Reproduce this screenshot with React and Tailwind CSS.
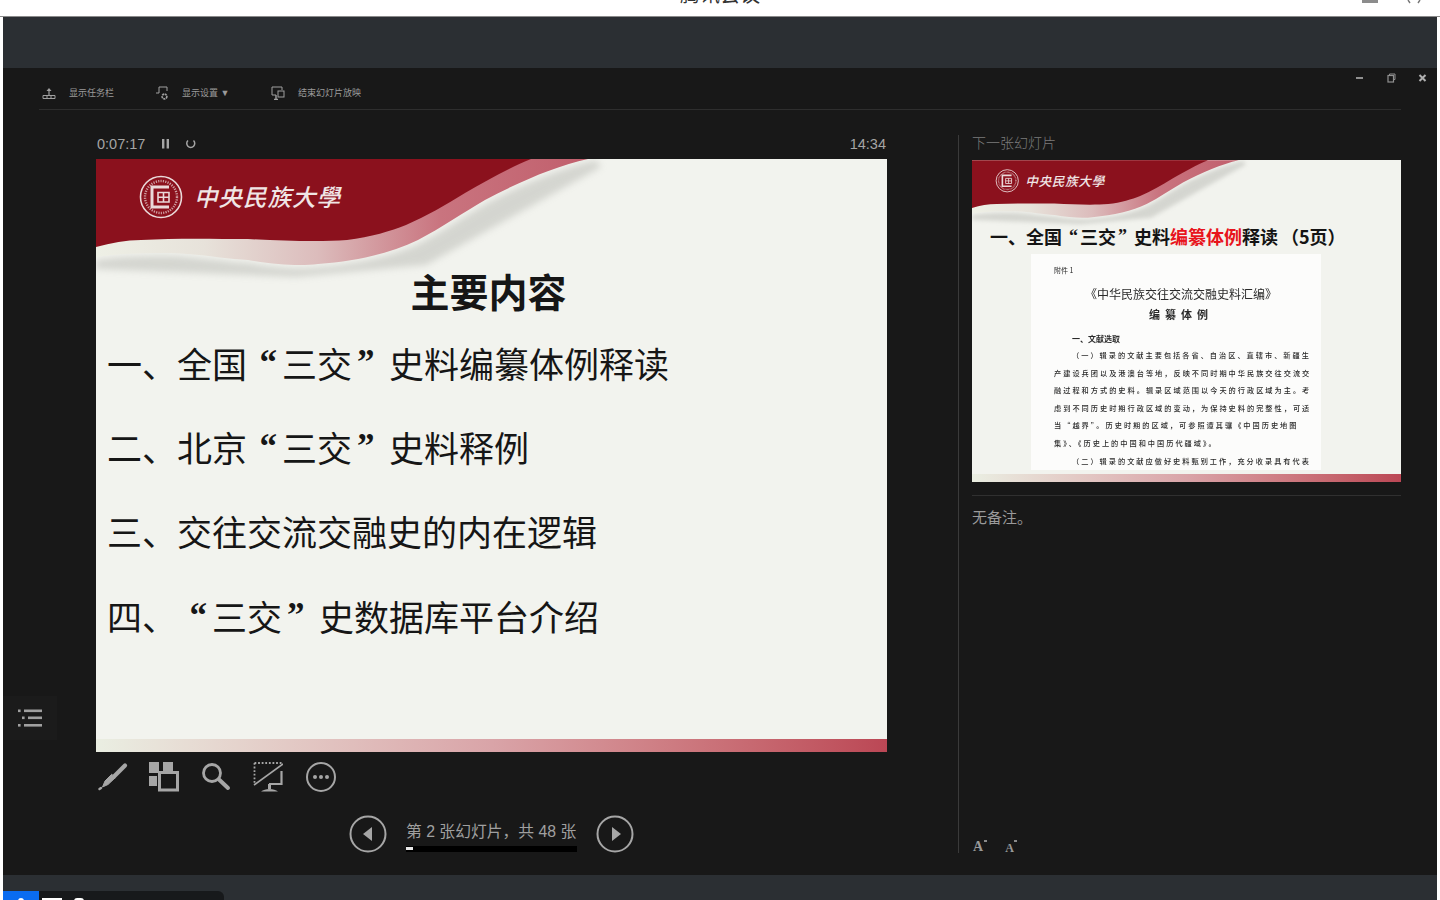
import React from "react";

const SANS = "font-['Liberation_Sans','Noto_Sans_CJK_SC',sans-serif]";
const SLIDE_FONT = "font-['Noto_Sans_CJK_SC',sans-serif]";

function Q({ children, w, side }) {
  return (
    <span
      className={`inline-block font-['Liberation_Serif',serif] font-bold ${side === "l" ? "text-right" : "text-left"} ${w}`}
    >
      {children}
    </span>
  );
}

function Banner({ id }) {
  return (
    <svg viewBox="0 0 791 593" className="absolute inset-0 w-full h-full">
      <defs>
        <linearGradient id={`band${id}`} x1="0" x2="492" y1="0" y2="0" gradientUnits="userSpaceOnUse">
          <stop offset="0" stopColor="#eef0e6" />
          <stop offset="0.22" stopColor="#e7e2da" />
          <stop offset="0.45" stopColor="#dcbcbc" />
          <stop offset="0.7" stopColor="#c9747f" />
          <stop offset="1" stopColor="#c15f6c" />
        </linearGradient>
        <filter id={`sh${id}`} x="-10%" y="-30%" width="120%" height="160%">
          <feGaussianBlur stdDeviation="3.5" />
        </filter>
      </defs>
      <path
        d="M0 101 C25 97 50 97 75 97 C105 98 130 103 152 104 C180 109 205 110 222 108 C262 105 297 97 324 84 C347 72 370 56 391 44 C427 25 462 10 500 1 L505 8 L330 106 L200 118 L0 110 Z"
        fill="#a9aaa4"
        opacity="0.4"
        filter={`url(#sh${id})`}
      />
      <path
        d="M0 98 C25 94 50 94 75 94 C105 95 130 100 152 101 C180 106 205 107 222 105 C262 102 295 94 322 81 C345 69 368 53 389 41 C425 22 460 7 492 0 L0 0 Z"
        fill={`url(#band${id})`}
      />
      <path
        d="M0 88 C15 84 30 81 45 81 C80 79 120 80 152 80 C190 82 225 83 251 81 C275 78 295 72 310 66 C330 57 350 46 369 34 C390 22 415 8 435 0 L0 0 Z"
        fill="#8b111d"
      />
      <g fill="none" stroke="#ead9d9">
        <circle cx="65" cy="38" r="20.5" strokeWidth="1.6" />
        <circle cx="65" cy="38" r="16" strokeWidth="2.4" strokeDasharray="1.2 1.2" opacity="0.7" />
        <path d="M73 28 H56 V48 H73" strokeWidth="3" />
        <path d="M62 33.5 H73 V43 H62 Z M62 38.2 H73 M67.5 33.5 V43" strokeWidth="1.6" />
      </g>
      <text
        x="98"
        y="47"
        fill="#f0e5e5"
        fontSize="23.5"
        fontWeight="500"
        letterSpacing="1"
        fontStyle="italic"
        fontFamily="'Noto Sans CJK SC',sans-serif"
      >
        中央民族大學
      </text>
    </svg>
  );
}

function MainSlide() {
  const line = `h-[84.3px] flex items-center text-[35px] leading-none text-[#161616] whitespace-nowrap pl-[11px] ${SLIDE_FONT}`;
  const ql = "w-[35px] pr-[5px]";
  const qr = "w-[37px] pl-[5px]";
  return (
    <div className="relative shrink-0 w-[791px] h-[593px] bg-[#f2f3ee] flex flex-col overflow-hidden">
      <Banner id="a" />
      <div className="relative pt-[107px]">
        <div className={`h-[48px] pr-[6px] flex items-center justify-center text-[39px] font-bold leading-none text-[#161616] ${SLIDE_FONT}`}>
          主要内容
        </div>
        <div className="mt-[6px] flex flex-col">
          <div className={line}>
            一、全国<Q w={ql} side="l">“</Q>三交<Q w={qr} side="r">”</Q>史料编纂体例释读
          </div>
          <div className={line}>
            二、北京<Q w={ql} side="l">“</Q>三交<Q w={qr} side="r">”</Q>史料释例
          </div>
          <div className={line}>三、交往交流交融史的内在逻辑</div>
          <div className={line}>
            四、<Q w={ql} side="l">“</Q>三交<Q w={qr} side="r">”</Q>史数据库平台介绍
          </div>
        </div>
      </div>
      <div className="relative mt-auto h-[13px] bg-gradient-to-r from-[#eaeee2] via-[#d9a4a8] to-[#bb4755]" />
    </div>
  );
}

function NextSlide() {
  const body = [
    ["（一）辑录的文献主要包括各省、自治区、直辖市、新疆生", true],
    ["产建设兵团以及港澳台等地，反映不同时期中华民族交往交流交", false],
    ["融过程和方式的史料。辑录区域范围以今天的行政区域为主。考", false],
    ["虑到不同历史时期行政区域的变动，为保持史料的完整性，可适", false],
    ["当“越界”。历史时期的区域，可参照谭其骧《中国历史地图", false],
    ["集》、《历史上的中国和中国历代疆域》。", false],
    ["（二）辑录的文献应做好史料甄别工作，充分收录具有代表", true],
  ];
  const ql = "w-[18px] pr-[2px]";
  const qr = "w-[18px] pl-[2px]";
  return (
    <div className="relative shrink-0 w-[429px] h-[322px] bg-[#f2f3ee] flex flex-col overflow-hidden">
      <Banner id="b" />
      <div className={`relative pt-[64px] pl-[18px] h-[89px] flex items-start text-[18px] leading-[24px] font-bold text-[#141414] whitespace-nowrap ${SLIDE_FONT}`}>
        <span>一、全国</span>
        <Q w={ql} side="l">“</Q>
        <span>三交</span>
        <Q w={qr} side="r">”</Q>
        <span>史料</span>
        <span className="text-[#e8141c]">编纂体例</span>
        <span>释读</span>
        <span className="ml-[3px]">（5页）</span>
      </div>
      <div className={`relative mt-[5px] ml-[59px] w-[290px] h-[216px] bg-[#fcfcfb] overflow-hidden pl-[23px] text-[#2a2a2a] blur-[0.3px] ${SLIDE_FONT}`}>
        <div className="pt-[11px] text-[7px] leading-[10px]">附件 1</div>
        <div className="mt-[14px] pr-[13px] text-center text-[12px] leading-[10px] whitespace-nowrap">《中华民族交往交流交融史料汇编》</div>
        <div className="mt-[10px] pr-[13px] text-center text-[11px] leading-[10px] font-bold tracking-[5px]">编纂体例</div>
        <div className="mt-[15px] pl-[18px] text-[8px] leading-[10px] font-bold">一、文献选取</div>
        <div className="mt-[3px]">
          {body.map(([t, indent], i) => (
            <div
              key={i}
              className={`text-[7.2px] leading-[17.6px] tracking-[2px] font-medium whitespace-nowrap ${indent ? "pl-[18px]" : ""}`}
            >
              {t}
            </div>
          ))}
        </div>
      </div>
      <div className="absolute bottom-0 left-0 right-0 h-[8px] bg-gradient-to-r from-[#eaeee2] via-[#d9a4a8] to-[#bb4755]" />
    </div>
  );
}

const Gray = "#a6a6a6";

function Toolbar() {
  const txt = `text-[9px] leading-none text-[#9b9b9b] whitespace-nowrap ${SANS}`;
  return (
    <div className="h-[42px] mx-[36px] border-b border-[#2e2e2e] pt-[9px] flex items-center pl-[3px]">
      <div className="w-[113px] flex items-center gap-[13px]">
        <svg width="14" height="14" viewBox="0 0 14 14" fill="none" stroke="#a0a0a0">
          <path d="M7 2 L4.5 5 H9.5 Z" fill="#a0a0a0" stroke="none" />
          <path d="M7 5 V9" strokeWidth="1.2" />
          <path d="M1 9.5 H13 V12.5 H1 Z M5 9.5 V12.5 M9 9.5 V12.5" strokeWidth="1" />
        </svg>
        <span className={txt}>显示任务栏</span>
      </div>
      <div className="w-[116px] flex items-center gap-[13px]">
        <svg width="14" height="14" viewBox="0 0 14 14" fill="none" stroke="#a0a0a0">
          <path d="M4 7 V1 H12 V5" strokeWidth="1" />
          <path d="M1 7 H4" strokeWidth="1" />
          <circle cx="9.5" cy="10.5" r="2.4" strokeWidth="1.6" strokeDasharray="2 0.6" />
        </svg>
        <span className={txt}>显示设置 ▼</span>
      </div>
      <div className="flex items-center gap-[13px]">
        <svg width="14" height="14" viewBox="0 0 14 14" fill="none" stroke="#a0a0a0">
          <path d="M1 1 H11 V4 M1 1 V9 H5" strokeWidth="1" />
          <rect x="7" y="5" width="6" height="6" strokeWidth="1" />
          <path d="M3 13.5 H7 M5 9 V13.5" strokeWidth="1.4" />
        </svg>
        <span className={txt}>结束幻灯片放映</span>
      </div>
    </div>
  );
}

function WindowControls() {
  return (
    <div className="absolute top-[5px] right-[10px] flex items-center gap-[22px]">
      <div className="w-[9px] h-[10px] flex items-center">
        <div className="w-[7px] h-[2px] bg-[#909090]" />
      </div>
      <svg width="9" height="10" viewBox="0 0 9 10" fill="none" stroke="#909090">
        <path d="M2.5 2.5 V1 H8 V6.5 H6.5" strokeWidth="1" />
        <rect x="1" y="2.5" width="5.5" height="6.5" strokeWidth="1.2" />
      </svg>
      <svg width="9" height="10" viewBox="0 0 9 10" fill="none" stroke="#b0b0b0">
        <path d="M1.5 2 L7.5 8 M7.5 2 L1.5 8" strokeWidth="2" />
      </svg>
    </div>
  );
}

function Tools() {
  return (
    <div className="shrink-0 mt-[10px] ml-[1px] flex gap-[22px] h-[30px]">
      <svg width="30" height="30" viewBox="0 0 30 30" fill="none" stroke={Gray} strokeLinecap="round" className="translate-x-[1px]">
        <path d="M27 3.5 L16 14.5" strokeWidth="4.2" />
        <path d="M13.5 12.5 L7 19 L4.5 25 L10 22.5 L17 16 Z" fill={Gray} stroke={Gray} strokeWidth="1" />
        <path d="M1.5 27 L3 26" strokeWidth="2.4" />
      </svg>
      <svg width="30" height="30" viewBox="0 0 30 30" fill="none">
        <rect x="0" y="0" width="10" height="11" fill={Gray} />
        <rect x="14" y="0" width="10" height="9" fill={Gray} />
        <rect x="0" y="14" width="8" height="10" fill={Gray} />
        <rect x="10.5" y="10.5" width="18" height="17.5" stroke={Gray} strokeWidth="3" />
      </svg>
      <svg width="30" height="30" viewBox="0 0 30 30" fill="none" stroke={Gray} strokeLinecap="round">
        <circle cx="11" cy="11" r="8.5" strokeWidth="2.8" />
        <path d="M18 17.5 L27 26" strokeWidth="4" />
      </svg>
      <svg width="30" height="30" viewBox="0 0 30 30" fill="none" stroke={Gray}>
        <path d="M1.5 1 H29 M1.5 1 V22" strokeWidth="1.8" strokeDasharray="1.8 1.8" />
        <path d="M1 23 L30 2" strokeWidth="1.6" />
        <path d="M28.5 9 V22 H16" strokeWidth="2.2" />
        <path d="M15 22 H18 V27 H15 Z" fill={Gray} stroke="none" />
        <path d="M8 29.5 C12 26 21 26 25 29.5 Z" fill={Gray} stroke="none" />
      </svg>
      <svg width="30" height="30" viewBox="0 0 30 30" fill="none" stroke={Gray} className="translate-x-[1px]">
        <circle cx="15" cy="15" r="14" strokeWidth="2" />
        <circle cx="9" cy="15" r="2" fill={Gray} stroke="none" />
        <circle cx="15" cy="15" r="2" fill={Gray} stroke="none" />
        <circle cx="21" cy="15" r="2" fill={Gray} stroke="none" />
      </svg>
    </div>
  );
}

function NavBtn({ dir }) {
  return (
    <svg width="38" height="38" viewBox="0 0 38 38" fill="none" className="shrink-0">
      <circle cx="19" cy="19" r="17.5" stroke={Gray} strokeWidth="2" />
      {dir === "l" ? (
        <path d="M14 19 L23 12 V26 Z" fill={Gray} />
      ) : (
        <path d="M25 19 L16 12 V26 Z" fill={Gray} />
      )}
    </svg>
  );
}

function Nav() {
  return (
    <div className="shrink-0 mt-[22px] ml-[253px] flex items-center h-[40px]">
      <NavBtn dir="l" />
      <div className="ml-[19px] mr-[19px] w-[171px] h-[40px] flex flex-col">
        <div className={`mt-[7px] text-[15.8px] leading-[22px] text-[#a0a0a0] whitespace-nowrap ${SANS}`}>
          第 2 张幻灯片，共 48 张
        </div>
        <div className="mt-[3px] h-[6px] bg-black">
          <div className="h-[3px] w-[7px] bg-[#e8e8e8] translate-y-[1px]" />
        </div>
      </div>
      <NavBtn dir="r" />
    </div>
  );
}

function LeftColumn() {
  return (
    <div className="w-[920px] h-full border-r border-[#3a3a3a] pl-[57px] flex flex-col">
      <div className={`shrink-0 w-[791px] h-[24px] flex justify-between text-[14.5px] leading-[18px] text-[#a5a5a5] ${SANS}`}>
        <div className="flex items-start">
          <span className="w-[48px] ml-[1px]">0:07:17</span>
          <svg width="10" height="18" viewBox="0 0 10 18" className="ml-[16px]" fill="#a5a5a5">
            <rect x="1" y="4" width="2.4" height="9.5" />
            <rect x="5.6" y="4" width="2.4" height="9.5" />
          </svg>
          <svg width="12" height="18" viewBox="0 0 12 18" className="ml-[14px]" fill="none" stroke="#a5a5a5">
            <path d="M8.5 5.5 A4 4 0 1 1 3 5.5" strokeWidth="1.5" />
          </svg>
        </div>
        <span className="pr-[1px]">14:34</span>
      </div>
      <MainSlide />
      <Tools />
      <Nav />
    </div>
  );
}

function RightColumn() {
  return (
    <div className="flex-1 h-full pl-[13px] flex flex-col">
      <div className={`h-[25px] -mt-[1px] mb-[1px] text-[14px] leading-[18px] text-[#7c7c7c] ${SANS} font-light`}>下一张幻灯片</div>
      <NextSlide />
      <div className="mt-[13px] border-t border-[#303030]" />
      <div className={`pt-[11px] text-[15px] leading-[22px] text-[#9a9a9a] ${SANS}`}>无备注。</div>
      <div className="mt-auto flex items-end gap-[19px] h-[14px] pl-[1px] translate-y-[1px] font-['Liberation_Serif',serif] font-bold text-[#999999] leading-none">
        <span className="relative text-[14px]">
          A<span className="absolute top-0 -right-[4px] w-[3px] h-[2px] bg-[#8a8a8a]" />
        </span>
        <span className="relative text-[12px] ml-[3px]">
          A<span className="absolute -top-[2px] -right-[3px] w-[3px] h-[2px] bg-[#8a8a8a]" />
        </span>
      </div>
    </div>
  );
}

function MenuButton() {
  return (
    <div className="absolute left-0 top-[628px] w-[54px] h-[44px] bg-[#1b1b1b] flex items-center justify-center">
      <svg width="26" height="22" viewBox="0 0 26 22" fill="#a0a0a0" className="mr-[1px]">
        <rect x="1" y="2.5" width="2.6" height="2.6" />
        <rect x="7" y="2.5" width="18" height="2.6" />
        <rect x="5" y="9.5" width="2.6" height="2.6" />
        <rect x="11" y="9.5" width="14" height="2.6" />
        <rect x="1" y="17" width="2.6" height="2.6" />
        <rect x="7" y="17" width="18" height="2.6" />
      </svg>
    </div>
  );
}

function Footer() {
  return (
    <div className="h-[25px] bg-[#2b2f33] pt-[16px] flex overflow-hidden">
      <div className="w-[36px] h-[9px] bg-[#0a6cf0] flex justify-center pt-[7px]">
        <div className="w-[6px] h-[6px] rounded-full bg-white" />
      </div>
      <div className="w-[185px] h-[9px] bg-[#17191b] rounded-tr-[6px] pt-[7px] pl-[3px] flex gap-[12px]">
        <div className="w-[20px] h-[4px] bg-white" />
        <div className="w-[10px] h-[6px] rounded-full bg-white" />
      </div>
    </div>
  );
}

export default function App() {
  return (
    <div className="w-[1440px] h-[900px] bg-white overflow-hidden flex flex-col">
      <div className="relative h-[17px] shrink-0 overflow-hidden border-b border-[#8a8a8a] flex justify-center">
        <div className={`-mt-[15px] text-[20px] leading-[20px] text-[#333333] ${SANS}`}>腾讯会议</div>
        <div className="absolute top-0 left-[1362px] w-[16px] h-[3px] bg-[#8c8c8c]" />
        <svg width="14" height="5" viewBox="0 0 14 5" className="absolute top-0 left-[1407px]" fill="none" stroke="#777777">
          <path d="M3 3 L1 0 M11 3 L13 0" strokeWidth="1.4" />
        </svg>
      </div>
      <div className="px-[3px] flex-1 flex flex-col">
        <div className="h-[51px] bg-[#2b2f33]" />
        <div className="relative h-[807px] bg-[#181818]">
          <Toolbar />
          <WindowControls />
          <MenuButton />
          <div className="mt-[25px] mx-[36px] h-[718px] flex">
            <LeftColumn />
            <RightColumn />
          </div>
        </div>
        <Footer />
      </div>
    </div>
  );
}
